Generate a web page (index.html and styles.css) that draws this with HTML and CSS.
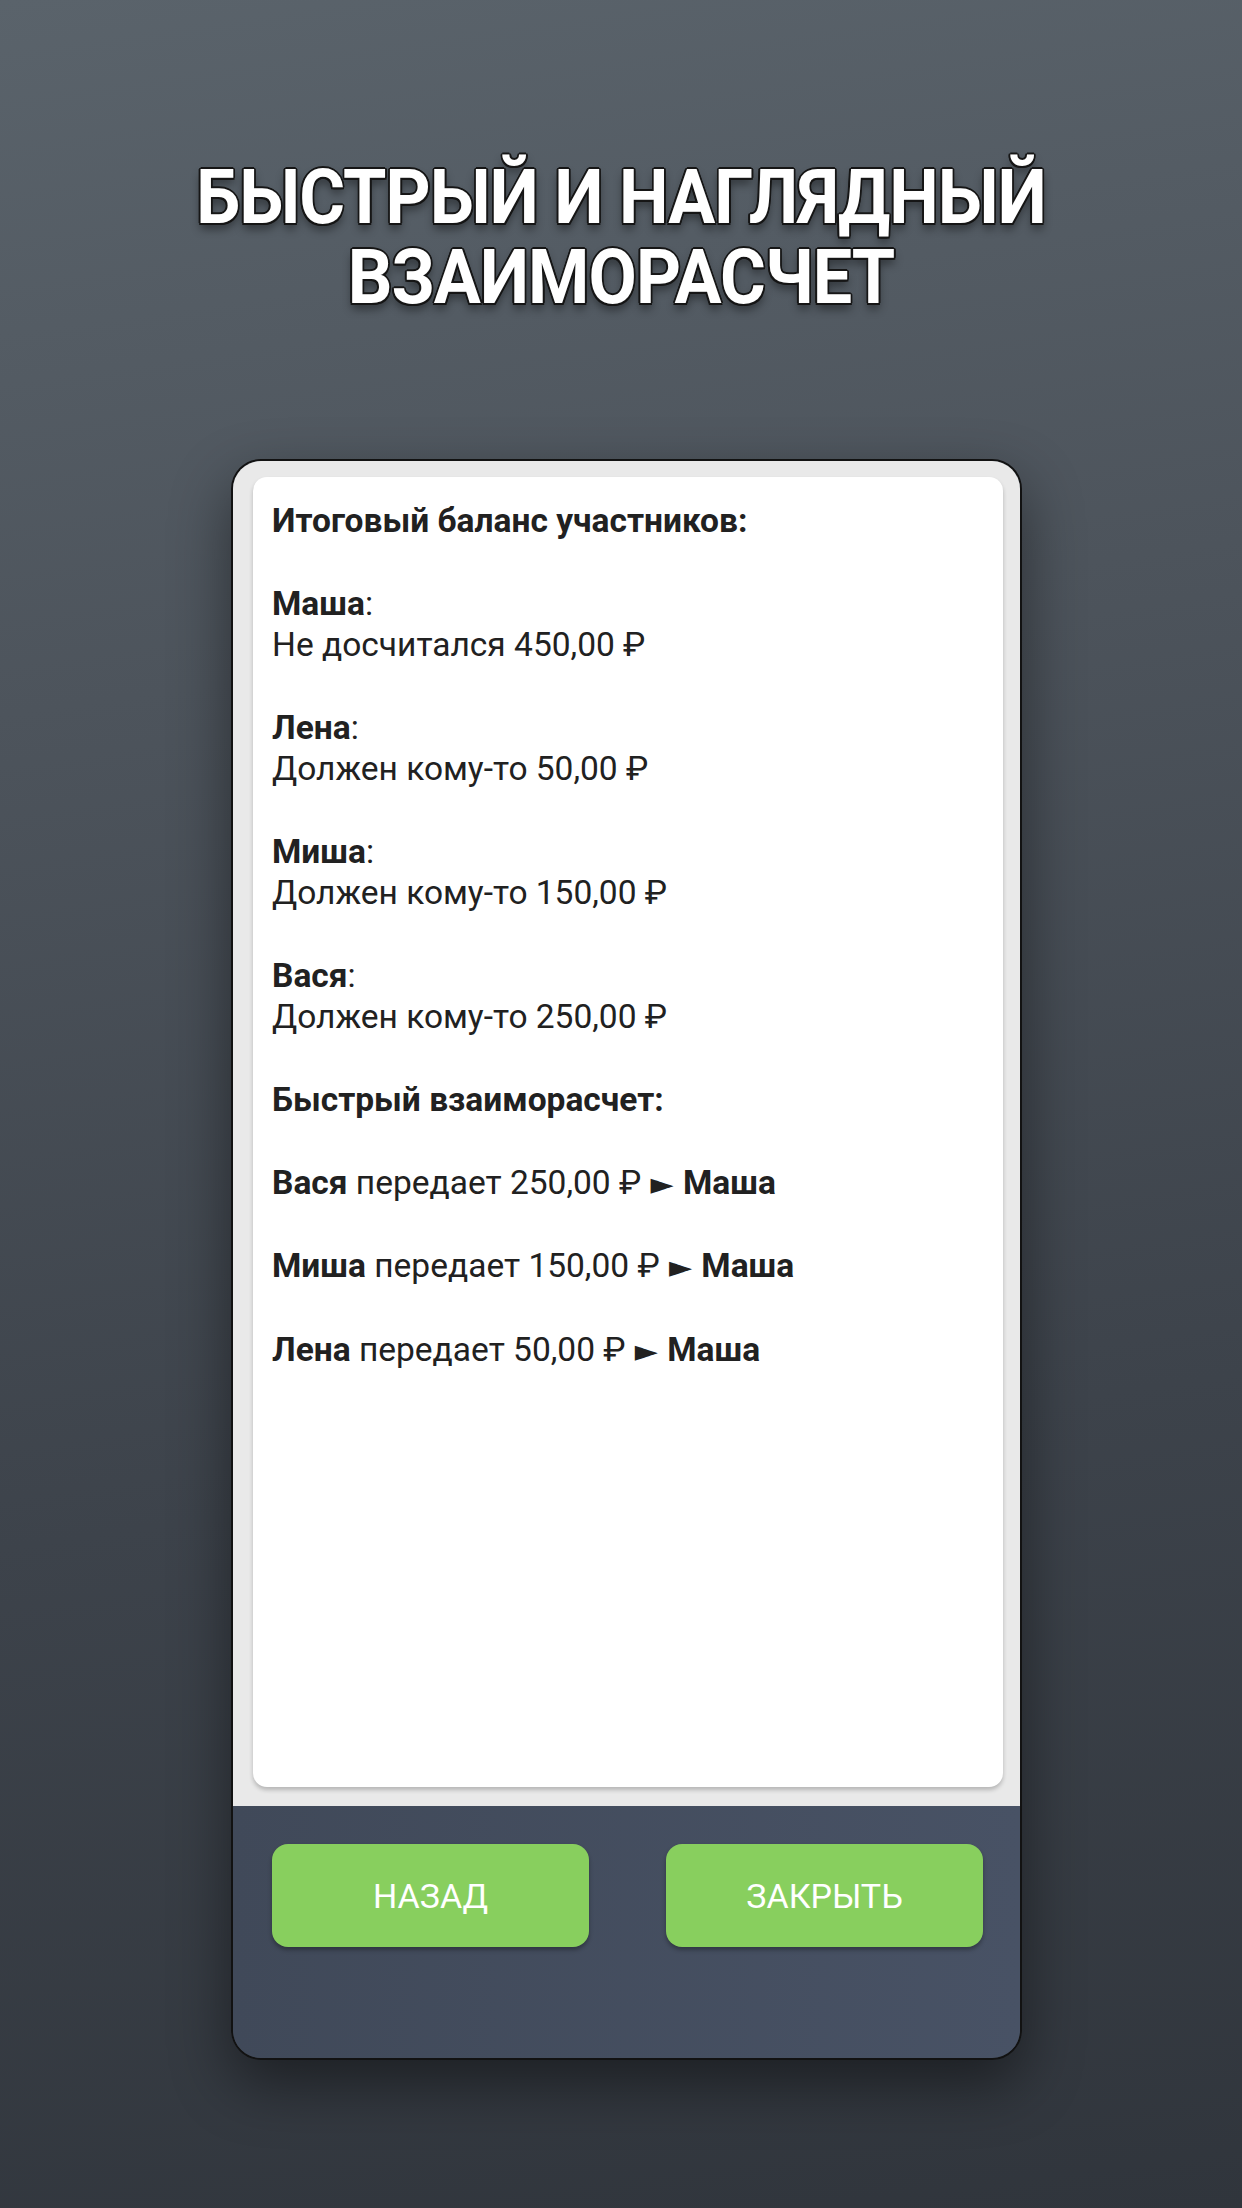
FILE: index.html
```html
<!DOCTYPE html>
<html lang="ru">
<head>
<meta charset="utf-8">
<title>Взаиморасчет</title>
<link rel="stylesheet" href="styles.css">
</head>
<body>
<div class="page">
  <h1 class="headline">БЫСТРЫЙ И НАГЛЯДНЫЙ<br>ВЗАИМОРАСЧЕТ</h1>
  <div class="phone">
    <div class="sheet">
      <div class="card">
        <p class="line"><b>Итоговый баланс участников:</b></p>
        <p class="line empty">&nbsp;</p>
        <p class="line"><b>Маша</b>:</p>
        <p class="line">Не досчитался 450,00 ₽</p>
        <p class="line empty">&nbsp;</p>
        <p class="line"><b>Лена</b>:</p>
        <p class="line">Должен кому-то 50,00 ₽</p>
        <p class="line empty">&nbsp;</p>
        <p class="line"><b>Миша</b>:</p>
        <p class="line">Должен кому-то 150,00 ₽</p>
        <p class="line empty">&nbsp;</p>
        <p class="line"><b>Вася</b>:</p>
        <p class="line">Должен кому-то 250,00 ₽</p>
        <p class="line empty">&nbsp;</p>
        <p class="line"><b>Быстрый взаиморасчет:</b></p>
        <p class="line empty">&nbsp;</p>
        <p class="line"><b>Вася</b> передает 250,00 ₽ <span class="arrow">►</span> <b>Маша</b></p>
        <p class="line empty">&nbsp;</p>
        <p class="line"><b>Миша</b> передает 150,00 ₽ <span class="arrow">►</span> <b>Маша</b></p>
        <p class="line empty">&nbsp;</p>
        <p class="line"><b>Лена</b> передает 50,00 ₽ <span class="arrow">►</span> <b>Маша</b></p>
      </div>
    </div>
    <div class="actions">
      <div class="btn">НАЗАД</div>
      <div class="btn">ЗАКРЫТЬ</div>
    </div>
  </div>
</div>
</body>
</html>
```
FILE: styles.css
```css
html, body {
  margin: 0;
  padding: 0;
}
body {
  width: 1242px;
  height: 2208px;
  overflow: hidden;
  background: linear-gradient(172deg, #5a636b 0%, #4d545c 30%, #3d434b 65%, #30353c 100%);
  font-family: Roboto, "Noto Sans", "DejaVu Sans", sans-serif;
}
.page {
  display: flex;
  flex-direction: column;
  padding-top: 157px;
}
.headline {
  margin: 0;
  text-align: center;
  color: #ffffff;
  font-family: Roboto, "Noto Sans", sans-serif;
  font-weight: 700;
  font-size: 76px;
  line-height: 80px;
  letter-spacing: -1px;
  transform: scaleX(0.922);
  text-shadow:
    2px 0 0 #161616, -2px 0 0 #161616, 0 2px 0 #161616, 0 -2px 0 #161616,
    1.5px 1.5px 0 #161616, -1.5px 1.5px 0 #161616, 1.5px -1.5px 0 #161616, -1.5px -1.5px 0 #161616,
    0 6px 10px rgba(0, 0, 0, 0.45);
}
.phone {
  margin: 142px 0 0 231px;
  width: 787px;
  border: 2px solid #121212;
  border-radius: 30px;
  overflow: hidden;
  display: flex;
  flex-direction: column;
  box-shadow: 0 24px 60px rgba(0, 0, 0, 0.45);
}
.sheet {
  background: #e9e9e9;
  padding: 16px 17px 19px 20px;
}
.card {
  height: 1310px;
  box-sizing: border-box;
  background: #ffffff;
  border-radius: 14px;
  box-shadow: 0 3px 4px rgba(0, 0, 0, 0.22);
  padding: 23px 18px 0 19px;
  color: #212121;
  font-size: 33.5px;
  line-height: 41.35px;
}
.line {
  margin: 0;
  white-space: nowrap;
}
.line b {
  font-weight: 700;
}
.arrow {
  display: inline-block;
  font-family: "DejaVu Sans", sans-serif;
  font-size: 30px;
  margin: 0 1px;
}
.actions {
  height: 252px;
  box-sizing: border-box;
  background: linear-gradient(90deg, #404959 0%, #485265 100%);
  display: flex;
  gap: 77px;
  padding: 38px 37px 0 39px;
  align-items: flex-start;
}
.btn {
  width: 317px;
  height: 103px;
  border-radius: 16px;
  background: #88cf5e;
  box-shadow: 0 3px 4px rgba(0, 0, 0, 0.3);
  color: #ffffff;
  font-size: 34px;
  display: flex;
  align-items: center;
  justify-content: center;
}
```
